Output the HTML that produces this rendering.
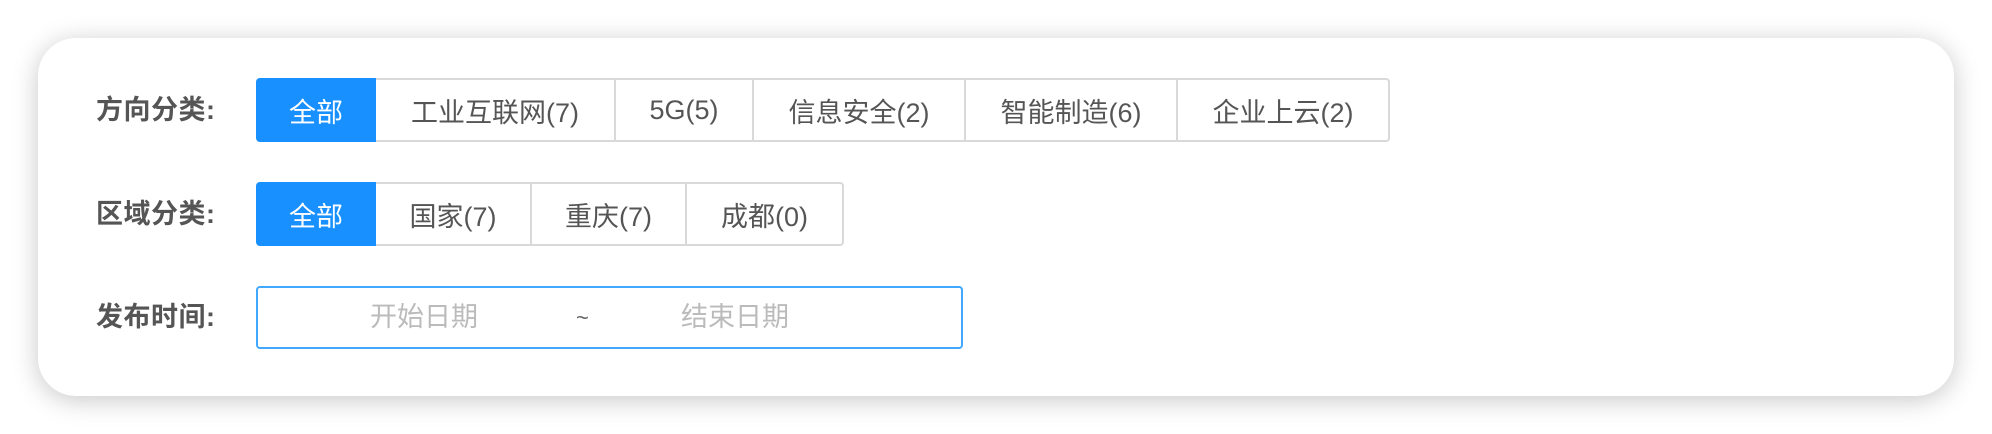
<!DOCTYPE html>
<html><head><meta charset="utf-8"><style>
html,body{margin:0;padding:0;width:1992px;height:434px;background:#fff;overflow:hidden;font-family:"Liberation Sans","Noto Sans CJK SC",sans-serif;}
.card{position:absolute;left:38px;top:38px;width:1916px;height:358px;background:#fff;border-radius:38px;box-shadow:0 4px 26px rgba(0,0,0,0.22);}
.lbl{position:absolute;left:96px;font-size:27px;font-weight:bold;color:#555;line-height:64px;letter-spacing:0.5px;}
.grp{position:absolute;left:256px;height:64px;display:flex;}
.b{box-sizing:border-box;height:64px;display:flex;align-items:center;justify-content:center;font-size:27px;color:#555;border:2px solid #d9d9d9;border-left:none;background:#fff;}
.b:last-child{border-radius:0 4px 4px 0;}
.b.on{background:#1890ff;color:#fff;border:none;border-radius:4px 0 0 4px;}
.inp{position:absolute;left:256px;top:286px;width:707px;height:63px;box-sizing:border-box;border:2px solid #40a9ff;border-radius:4px;}
.ph{position:absolute;top:0;line-height:59px;font-size:27px;color:#bbb;}
</style></head><body>
<div class="card"></div>
<div class="lbl" style="top:78px">方向分类:</div>
<div class="grp" style="top:78px">
<div class="b on" style="width:120px">全部</div>
<div class="b" style="width:240px">工业互联网(7)</div>
<div class="b" style="width:138px">5G(5)</div>
<div class="b" style="width:212px">信息安全(2)</div>
<div class="b" style="width:212px">智能制造(6)</div>
<div class="b" style="width:212px">企业上云(2)</div>
</div>
<div class="lbl" style="top:182px">区域分类:</div>
<div class="grp" style="top:182px">
<div class="b on" style="width:120px">全部</div>
<div class="b" style="width:156px">国家(7)</div>
<div class="b" style="width:155px">重庆(7)</div>
<div class="b" style="width:157px">成都(0)</div>
</div>
<div class="lbl" style="top:285px">发布时间:</div>
<div class="inp">
<span class="ph" style="left:112px">开始日期</span>
<span class="ph" style="left:318px;color:#666;font-size:22px">~</span>
<span class="ph" style="left:423px">结束日期</span>
</div>
</body></html>
